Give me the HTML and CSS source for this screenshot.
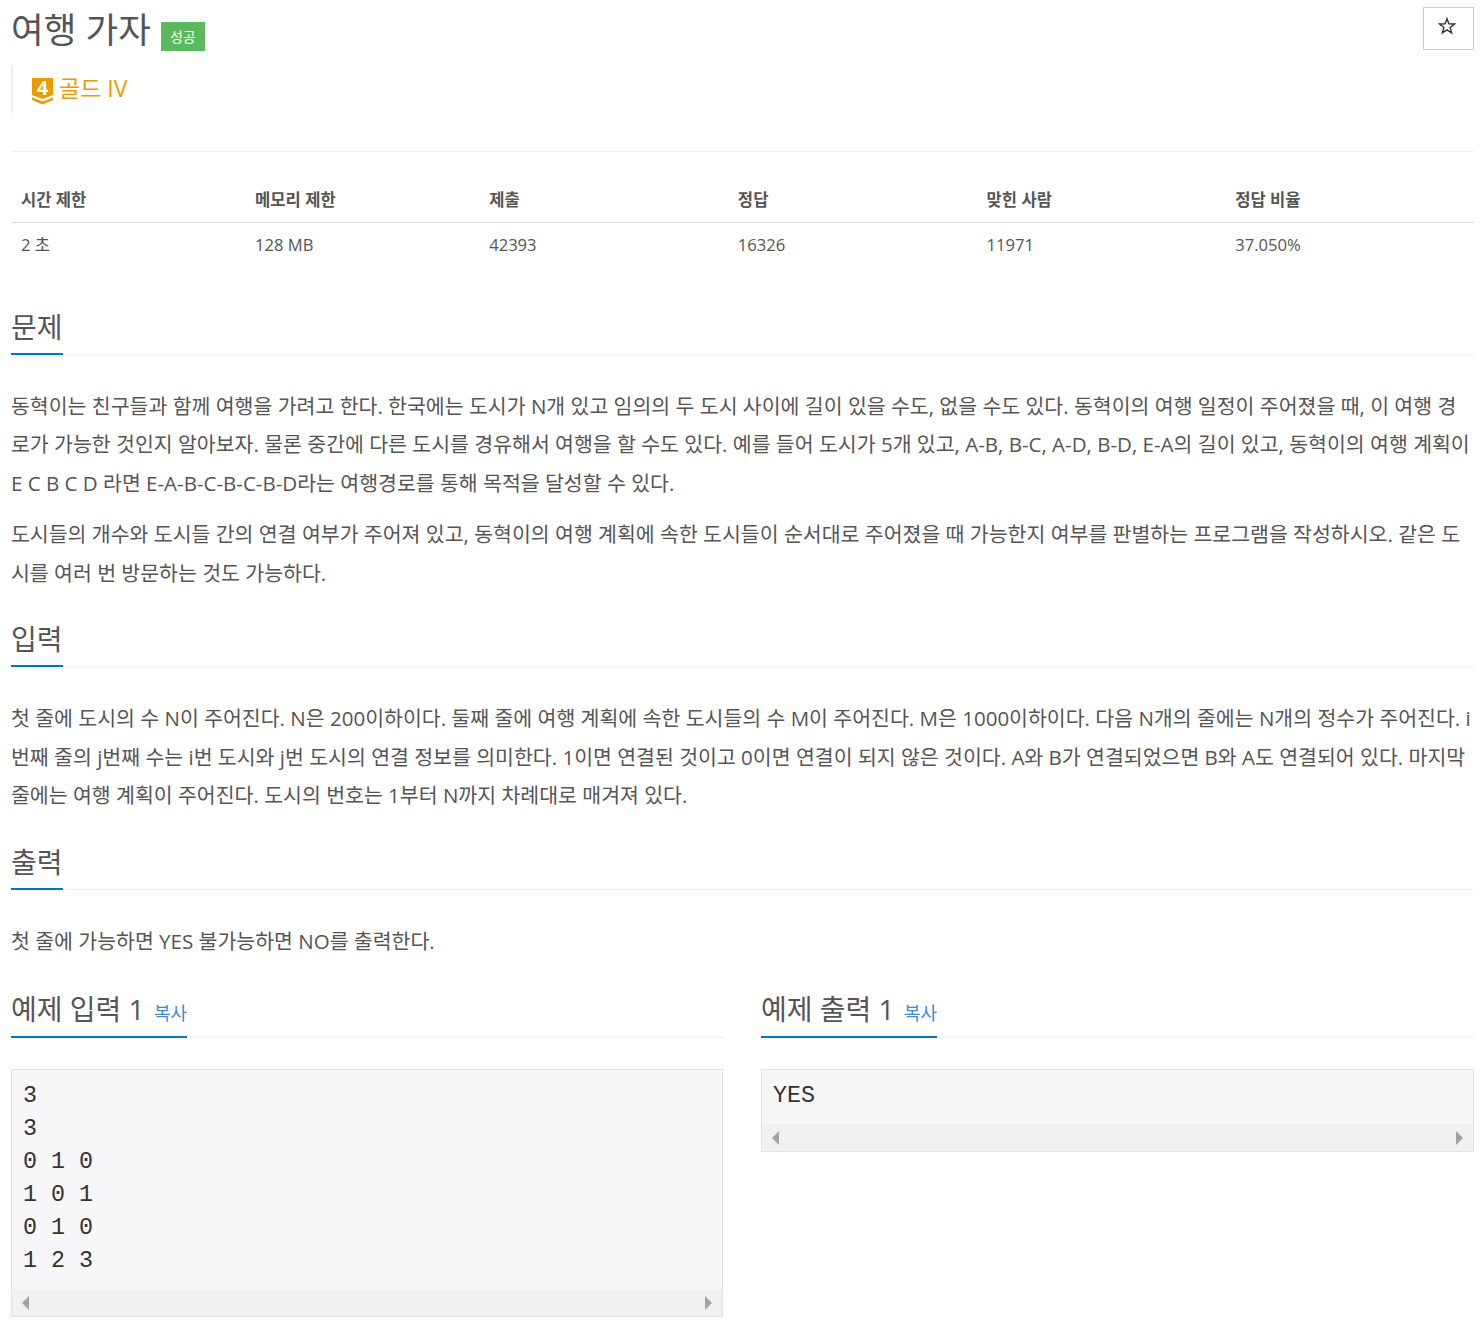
FILE: index.html
```html
<!DOCTYPE html>
<html lang="ko">
<head>
<meta charset="utf-8">
<title>여행 가자</title>
<link rel="stylesheet" href="styles.css">
</head>
<body>
<main class="page">
  <header class="title-row">
    <div class="title-main">
      <h1 class="title">여행 가자</h1>
      <span class="badge">성공</span>
    </div>
    <button class="star-btn" type="button" aria-label="즐겨찾기">
      <svg class="star-icon" viewBox="0 0 18 18" width="18" height="18"><path d="M9 1.800l1.900 5 5.600.2-4.400 3.400 1.500 5.400L9 12.800l-4.600 3 1.500-5.400L1.500 7l5.600-.2z" fill="none" stroke="#333" stroke-width="1.400"/></svg>
    </button>
  </header>
  <div class="tier-quote">
    <svg class="tier-icon" viewBox="0 0 21 27" width="21" height="27"><path d="M0 0h21v17l-10.500 4L0 17z" fill="#ec9a00"/><path d="M0 19.500l10.500 4L21 19.500v2.500l-10.500 4.500L0 22z" fill="#ec9a00"/><text x="10.500" y="17" text-anchor="middle" class="tier-num">4</text></svg>
    <span class="tier-name">골드 IV</span>
  </div>
  <hr class="rule">
  <table class="info">
    <thead><tr><th>시간 제한</th><th>메모리 제한</th><th>제출</th><th>정답</th><th>맞힌 사람</th><th>정답 비율</th></tr></thead>
    <tbody><tr><td>2 초</td><td>128 MB</td><td>42393</td><td>16326</td><td>11971</td><td>37.050%</td></tr></tbody>
  </table>
  <section class="section first">
    <div class="head"><h2 class="head-title">문제</h2></div>
    <div class="body">
      <p>동혁이는 친구들과 함께 여행을 가려고 한다. 한국에는 도시가 N개 있고 임의의 두 도시 사이에 길이 있을 수도, 없을 수도 있다. 동혁이의 여행 일정이 주어졌을 때, 이 여행 경로가 가능한 것인지 알아보자. 물론 중간에 다른 도시를 경유해서 여행을 할 수도 있다. 예를 들어 도시가 5개 있고, A-B, B-C, A-D, B-D, E-A의 길이 있고, 동혁이의 여행 계획이 E C B C D 라면 E-A-B-C-B-C-B-D라는 여행경로를 통해 목적을 달성할 수 있다.</p>
      <p>도시들의 개수와 도시들 간의 연결 여부가 주어져 있고, 동혁이의 여행 계획에 속한 도시들이 순서대로 주어졌을 때 가능한지 여부를 판별하는 프로그램을 작성하시오. 같은 도시를 여러 번 방문하는 것도 가능하다.</p>
    </div>
  </section>
  <section class="section">
    <div class="head"><h2 class="head-title">입력</h2></div>
    <div class="body">
      <p>첫 줄에 도시의 수 N이 주어진다. N은 200이하이다. 둘째 줄에 여행 계획에 속한 도시들의 수 M이 주어진다. M은 1000이하이다. 다음 N개의 줄에는 N개의 정수가 주어진다. i번째 줄의 j번째 수는 i번 도시와 j번 도시의 연결 정보를 의미한다. 1이면 연결된 것이고 0이면 연결이 되지 않은 것이다. A와 B가 연결되었으면 B와 A도 연결되어 있다. 마지막 줄에는 여행 계획이 주어진다. 도시의 번호는 1부터 N까지 차례대로 매겨져 있다.</p>
    </div>
  </section>
  <section class="section">
    <div class="head"><h2 class="head-title">출력</h2></div>
    <div class="body">
      <p>첫 줄에 가능하면 YES 불가능하면 NO를 출력한다.</p>
    </div>
  </section>
  <div class="samples">
    <section class="sample">
      <div class="head sample-head"><h2 class="head-title">예제 입력 1 <a class="copy">복사</a></h2></div>
      <div class="code-box">
        <pre class="code">3
3
0 1 0
1 0 1
0 1 0
1 2 3</pre>
        <div class="scrollbar"><span class="arrow left"></span><span class="arrow right"></span></div>
      </div>
    </section>
    <section class="sample">
      <div class="head sample-head"><h2 class="head-title">예제 출력 1 <a class="copy">복사</a></h2></div>
      <div class="code-box">
        <pre class="code">YES</pre>
        <div class="scrollbar"><span class="arrow left"></span><span class="arrow right"></span></div>
      </div>
    </section>
  </div>
</main>
</body>
</html>
```
FILE: styles.css
```css
* { box-sizing: border-box; }
html, body { margin: 0; padding: 0; background: #fff; }
body {
  font-family: "Open Sans", "Noto Sans CJK KR", sans-serif;
  font-size: 14px;
  color: #555;
}
.page { width: 1463px; margin-left: 11px; }
.title-row { display: flex; justify-content: space-between; align-items: flex-start; padding-top: 7px; height: 58px; }
.title-main { display: flex; align-items: flex-start; }
.title { margin: 0; font-size: 35.500px; font-weight: 400; line-height: 44px; color: #555; }
.badge {
  margin: 15px 0 0 10px;
  width: 44px; height: 29px;
  background: #5cb85c; color: #fff;
  font-size: 14px; line-height: 29px; text-align: center;
}
.star-btn {
  width: 51px; height: 43px; margin: 0; padding: 0;
  background: #fff; border: 1px solid #ccc; border-radius: 0;
  display: flex; align-items: center; justify-content: center;
}
.star-icon { display: block; margin: 0 3px 6px 0; }
.tier-quote {
  height: 48px; margin-top: 7px; padding-left: 19px;
  border-left: 2px solid #eee;
  display: flex; align-items: flex-start; padding-top: 11px;
}
.tier-icon { display: block; margin: 2px 6px 0 0; flex: none; overflow: visible; }
.tier-num { font: 700 20px "Open Sans", sans-serif; fill: #fff; }
.tier-name { font-size: 23px; line-height: 24px; color: #ec9a00; }
.rule { margin: 38px 0 0; border: 0; border-top: 1px solid #eee; }
.info { width: 100%; border-collapse: collapse; table-layout: fixed; margin-top: 29px; }
.info th:nth-child(1), .info th:nth-child(2) { width: 16%; }
.info th:nth-child(n+3) { width: 17%; }
.info th {
  text-align: left; font-weight: 700; color: #555; font-size: 16.600px;
  padding: 0 10px 12px; height: 41px; line-height: 20px;
  border-bottom: 1px solid #ddd; vertical-align: bottom;
}
.info td { padding: 12px 10px 0; font-size: 16.600px; line-height: 20px; color: #555; }
.section { margin-top: 28.500px; }
.section.first { margin-top: 54px; }
.head { border-bottom: 1px dotted #e6e6e6; height: 46px; }
.sample-head { height: 47px; }
.head-title {
  display: inline-block; margin: 0; height: calc(100% + 1px);
  font-size: 28px; font-weight: 400; line-height: 36px; color: #555;
  border-bottom: 2px solid #0076c0;
}
.body { padding-top: 32px; font-size: 20.530px; line-height: 38.700px; color: #555; }
.body p { margin: 0 0 12.500px; }
.samples { display: grid; grid-template-columns: 712px 713px; gap: 38px; margin-top: 31px; }
.copy { font-size: 18px; color: #428bca; margin-left: 2px; }
.code-box {
  margin-top: 31px; background: #f7f7f9;
  border: 1px solid #e1e1e8;
}
.code {
  margin: 0; padding: 10px 11px 11px;
  font-family: "Liberation Mono", monospace; font-size: 23.330px; line-height: 33px; color: #333;
}
.scrollbar { height: 27px; background: #f1f1f1; display: flex; justify-content: space-between; align-items: center; padding: 0 10px; }
.arrow { width: 0; height: 0; border-top: 7px solid transparent; border-bottom: 7px solid transparent; }
.arrow.left { border-right: 7px solid #a3a3a3; }
.arrow.right { border-left: 7px solid #a3a3a3; }
```
